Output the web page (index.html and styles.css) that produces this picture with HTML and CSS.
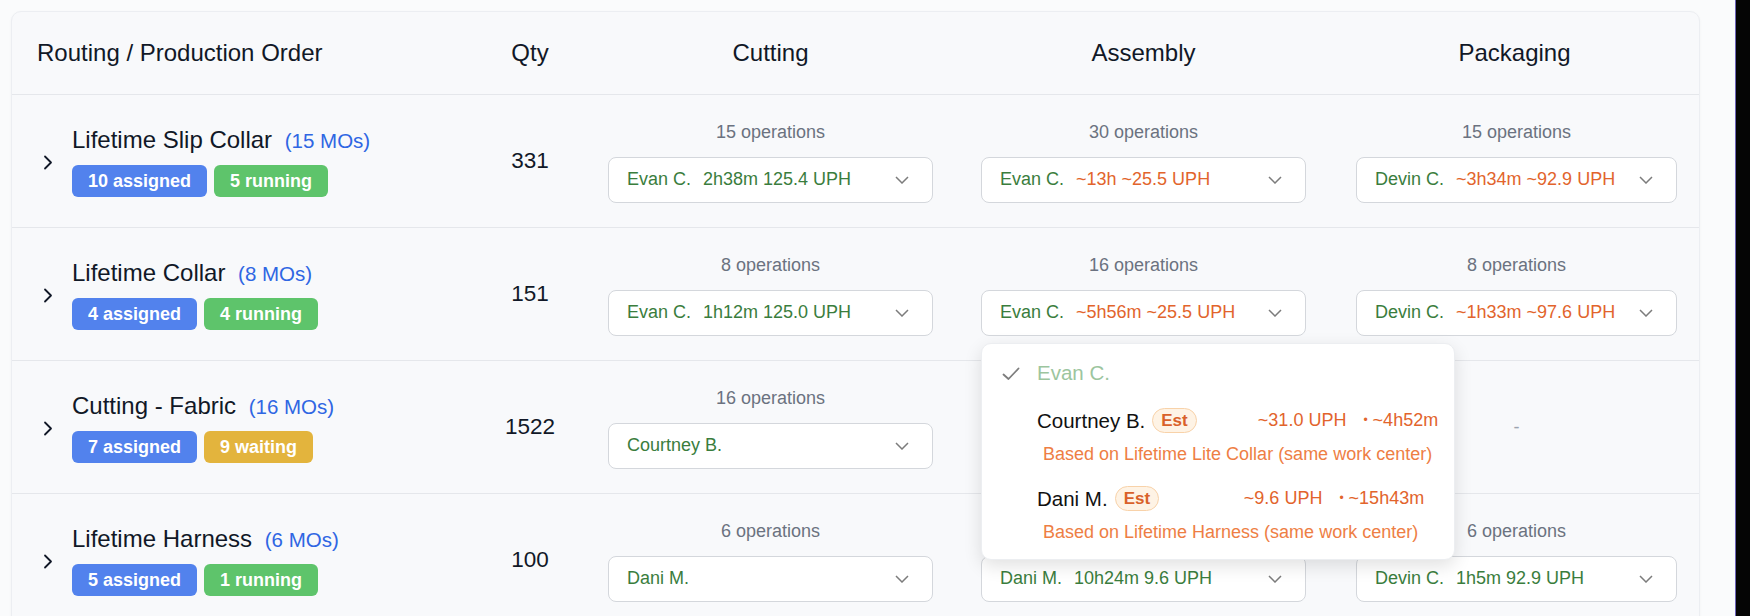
FILE: index.html
```html
<!DOCTYPE html>
<html lang="en">
<head>
<meta charset="utf-8">
<title>Routing</title>
<link rel="stylesheet" href="styles.css">
</head>
<body>
<div class="screen">
  <main class="page">
    <div class="card">
      <div class="row head">
        <div class="hcell left">Routing / Production Order</div>
        <div class="hcell">Qty</div>
        <div class="hcell">Cutting</div>
        <div class="hcell">Assembly</div>
        <div class="hcell">Packaging</div>
      </div>

      <!-- Row 1 -->
      <div class="row">
        <div class="rcell">
          <svg class="expand" width="10" height="15" viewBox="0 0 10 15"><polyline points="2,1.5 8,7.5 2,13.5" fill="none" stroke="#111827" stroke-width="1.8" stroke-linecap="round" stroke-linejoin="round"/></svg>
          <div class="info">
            <div class="name">Lifetime Slip Collar <span class="mos">(15 MOs)</span></div>
            <div class="badges"><span class="badge blue">10 assigned</span><span class="badge green">5 running</span></div>
          </div>
        </div>
        <div class="qty">331</div>
        <div class="stage">
          <div class="ops">15 operations</div>
          <div class="selwrap"><div class="select"><span class="val"><span class="who">Evan C.</span><span class="ok">2h38m 125.4 UPH</span></span><svg class="caret" width="14" height="8" viewBox="0 0 14 8"><polyline points="1,1 7,7 13,1" fill="none" stroke="#7c7c7c" stroke-width="1.5"/></svg></div></div>
        </div>
        <div class="stage">
          <div class="ops">30 operations</div>
          <div class="selwrap"><div class="select"><span class="val"><span class="who">Evan C.</span><span class="est">~13h ~25.5 UPH</span></span><svg class="caret" width="14" height="8" viewBox="0 0 14 8"><polyline points="1,1 7,7 13,1" fill="none" stroke="#7c7c7c" stroke-width="1.5"/></svg></div></div>
        </div>
        <div class="stage last">
          <div class="ops">15 operations</div>
          <div class="selwrap"><div class="select"><span class="val"><span class="who">Devin C.</span><span class="est">~3h34m ~92.9 UPH</span></span><svg class="caret" width="14" height="8" viewBox="0 0 14 8"><polyline points="1,1 7,7 13,1" fill="none" stroke="#7c7c7c" stroke-width="1.5"/></svg></div></div>
        </div>
      </div>

      <!-- Row 2 -->
      <div class="row">
        <div class="rcell">
          <svg class="expand" width="10" height="15" viewBox="0 0 10 15"><polyline points="2,1.5 8,7.5 2,13.5" fill="none" stroke="#111827" stroke-width="1.8" stroke-linecap="round" stroke-linejoin="round"/></svg>
          <div class="info">
            <div class="name">Lifetime Collar <span class="mos">(8 MOs)</span></div>
            <div class="badges"><span class="badge blue">4 assigned</span><span class="badge green">4 running</span></div>
          </div>
        </div>
        <div class="qty">151</div>
        <div class="stage">
          <div class="ops">8 operations</div>
          <div class="selwrap"><div class="select"><span class="val"><span class="who">Evan C.</span><span class="ok">1h12m 125.0 UPH</span></span><svg class="caret" width="14" height="8" viewBox="0 0 14 8"><polyline points="1,1 7,7 13,1" fill="none" stroke="#7c7c7c" stroke-width="1.5"/></svg></div></div>
        </div>
        <div class="stage">
          <div class="ops">16 operations</div>
          <div class="selwrap">
            <div class="select"><span class="val"><span class="who">Evan C.</span><span class="est">~5h56m ~25.5 UPH</span></span><svg class="caret" width="14" height="8" viewBox="0 0 14 8"><polyline points="1,1 7,7 13,1" fill="none" stroke="#7c7c7c" stroke-width="1.5"/></svg></div>
            <div class="menu">
              <div class="opt current">
                <svg class="check" width="18" height="14" viewBox="0 0 18 14"><polyline points="1.5,7.5 6.5,12 16.5,1.5" fill="none" stroke="#7d7d7d" stroke-width="1.8" stroke-linecap="round" stroke-linejoin="round"/></svg>
                <span class="cur-name">Evan C.</span>
              </div>
              <div class="opt">
                <div class="optbox">
                  <div class="optline">
                    <span class="optname">Courtney B. <span class="tag">Est</span></span>
                    <span class="optstats">~31.0 UPH <span class="dot">•</span>~4h52m</span>
                  </div>
                  <div class="optdesc">Based on Lifetime Lite Collar (same work center)</div>
                </div>
              </div>
              <div class="opt">
                <div class="optbox">
                  <div class="optline">
                    <span class="optname">Dani M. <span class="tag">Est</span></span>
                    <span class="optstats">~9.6 UPH <span class="dot">•</span>~15h43m</span>
                  </div>
                  <div class="optdesc">Based on Lifetime Harness (same work center)</div>
                </div>
              </div>
            </div>
          </div>
        </div>
        <div class="stage last">
          <div class="ops">8 operations</div>
          <div class="selwrap"><div class="select"><span class="val"><span class="who">Devin C.</span><span class="est">~1h33m ~97.6 UPH</span></span><svg class="caret" width="14" height="8" viewBox="0 0 14 8"><polyline points="1,1 7,7 13,1" fill="none" stroke="#7c7c7c" stroke-width="1.5"/></svg></div></div>
        </div>
      </div>

      <!-- Row 3 -->
      <div class="row">
        <div class="rcell">
          <svg class="expand" width="10" height="15" viewBox="0 0 10 15"><polyline points="2,1.5 8,7.5 2,13.5" fill="none" stroke="#111827" stroke-width="1.8" stroke-linecap="round" stroke-linejoin="round"/></svg>
          <div class="info">
            <div class="name">Cutting - Fabric <span class="mos">(16 MOs)</span></div>
            <div class="badges"><span class="badge blue">7 assigned</span><span class="badge yellow">9 waiting</span></div>
          </div>
        </div>
        <div class="qty">1522</div>
        <div class="stage">
          <div class="ops">16 operations</div>
          <div class="selwrap"><div class="select"><span class="val"><span class="who">Courtney B.</span></span><svg class="caret" width="14" height="8" viewBox="0 0 14 8"><polyline points="1,1 7,7 13,1" fill="none" stroke="#7c7c7c" stroke-width="1.5"/></svg></div></div>
        </div>
        <div class="stage"></div>
        <div class="stage last"><div class="none">-</div></div>
      </div>

      <!-- Row 4 -->
      <div class="row">
        <div class="rcell">
          <svg class="expand" width="10" height="15" viewBox="0 0 10 15"><polyline points="2,1.5 8,7.5 2,13.5" fill="none" stroke="#111827" stroke-width="1.8" stroke-linecap="round" stroke-linejoin="round"/></svg>
          <div class="info">
            <div class="name">Lifetime Harness <span class="mos">(6 MOs)</span></div>
            <div class="badges"><span class="badge blue">5 assigned</span><span class="badge green">1 running</span></div>
          </div>
        </div>
        <div class="qty">100</div>
        <div class="stage">
          <div class="ops">6 operations</div>
          <div class="selwrap"><div class="select"><span class="val"><span class="who">Dani M.</span></span><svg class="caret" width="14" height="8" viewBox="0 0 14 8"><polyline points="1,1 7,7 13,1" fill="none" stroke="#7c7c7c" stroke-width="1.5"/></svg></div></div>
        </div>
        <div class="stage">
          <div class="ops"></div>
          <div class="selwrap"><div class="select"><span class="val"><span class="who">Dani M.</span><span class="ok">10h24m 9.6 UPH</span></span><svg class="caret" width="14" height="8" viewBox="0 0 14 8"><polyline points="1,1 7,7 13,1" fill="none" stroke="#7c7c7c" stroke-width="1.5"/></svg></div></div>
        </div>
        <div class="stage last">
          <div class="ops">6 operations</div>
          <div class="selwrap"><div class="select"><span class="val"><span class="who">Devin C.</span><span class="ok">1h5m 92.9 UPH</span></span><svg class="caret" width="14" height="8" viewBox="0 0 14 8"><polyline points="1,1 7,7 13,1" fill="none" stroke="#7c7c7c" stroke-width="1.5"/></svg></div></div>
        </div>
      </div>
    </div>
  </main>
  <div class="edge"></div>
</div>
</body>
</html>
```

FILE: styles.css
```css
* { box-sizing: border-box; }

html, body {
  margin: 0;
  padding: 0;
  height: 616px;
  overflow: hidden;
  background: #fafbfc;
  font-family: "Liberation Sans", Arial, Helvetica, sans-serif;
  color: #111827;
}

.screen {
  display: flex;
  width: 100%;
  height: 616px;
}

.page {
  flex: 1 1 auto;
  min-width: 0;
  padding: 11px 0 0 11px;
  overflow: hidden;
}

.edge {
  flex: 0 0 15px;
  width: 15px;
  height: 616px;
  background: #050505;
  border-left: 1px solid #6c63b8;
}

.card {
  width: 1689px;
  background: #f8f9fb;
  border: 1px solid #eceef2;
  border-radius: 10px;
  box-shadow: 0 1px 3px rgba(0, 0, 0, 0.04);
}

.row {
  display: grid;
  grid-template-columns: 464px 108px 373px 373px 369px;
  align-items: center;
  height: 133px;
  border-top: 1px solid #e5e7eb;
}

.row.head {
  height: 82px;
  border-top: none;
}

.hcell {
  font-size: 24px;
  text-align: center;
  color: #111827;
}

.hcell.left {
  text-align: left;
  padding-left: 25px;
}

.rcell {
  display: flex;
  align-items: center;
  padding-left: 31px;
  gap: 19px;
}

.expand { flex: none; margin-top: 2px; }

.info {
  display: flex;
  flex-direction: column;
  gap: 9px;
}

.name {
  font-size: 24px;
  line-height: 30px;
  color: #111827;
}

.mos {
  font-size: 20.5px;
  color: #2f66e3;
  margin-left: 6px;
}

.badges {
  display: flex;
  gap: 7px;
}

.badge {
  height: 32px;
  line-height: 32px;
  padding: 0 16px;
  border-radius: 6px;
  color: #ffffff;
  font-weight: 700;
  font-size: 18px;
}

.badge.blue { background: #5282ed; }
.badge.green { background: #5ec46b; }
.badge.yellow { background: #e3b43d; }

.qty {
  text-align: center;
  font-size: 22.5px;
  color: #111827;
}

.stage {
  display: flex;
  flex-direction: column;
  align-items: stretch;
  gap: 13px;
  padding: 0 24px;
}

.stage.last {
  padding: 0 22px 0 26px;
}

.ops {
  height: 24px;
  text-align: center;
  font-size: 18px;
  line-height: 24px;
  color: #6b7280;
}

.none {
  text-align: center;
  font-size: 18px;
  color: #9ca3af;
}

.selwrap {
  position: relative;
}

.select {
  height: 46px;
  background: #ffffff;
  border: 1px solid #d4d7dc;
  border-radius: 8px;
  padding: 0 23px 0 18px;
  display: flex;
  align-items: center;
  justify-content: space-between;
  font-size: 18px;
}

.val {
  display: flex;
  gap: 12px;
  white-space: nowrap;
}

.who { color: #3a7d3d; }
.ok { color: #3a7d3d; }
.est { color: #e2642c; }

.caret { flex: none; }

.menu {
  position: absolute;
  top: calc(100% + 7px);
  left: 0;
  z-index: 10;
  width: 474px;
  background: #ffffff;
  border: 1px solid #eceef1;
  border-radius: 10px;
  box-shadow: 0 6px 18px rgba(0, 0, 0, 0.12);
  padding: 6px 0 6px 0;
}

.opt {
  padding: 9px 0 9px 55px;
}

.opt.current {
  position: relative;
  height: 47px;
  display: flex;
  align-items: center;
  padding-top: 0;
  padding-bottom: 0;
}

.check {
  position: absolute;
  left: 20px;
  top: 17px;
}

.cur-name {
  font-size: 20.5px;
  color: #9cc59e;
}

.optbox {
  display: inline-flex;
  flex-direction: column;
  gap: 6px;
}

.optline {
  height: 30px;
  display: flex;
  align-items: center;
  justify-content: space-between;
}

.optname {
  display: flex;
  align-items: center;
  gap: 7px;
  font-size: 20.5px;
  color: #111111;
}

.tag {
  height: 25px;
  line-height: 23px;
  padding: 0 8px;
  border-radius: 13px;
  background: #fef3e5;
  border: 1px solid #f8d2a9;
  color: #d9612a;
  font-weight: 700;
  font-size: 17px;
}

.optstats {
  font-size: 18px;
  color: #e2642c;
  white-space: nowrap;
}

.dot {
  font-size: 12px;
  margin: 0 5px 0 12px;
  vertical-align: 2px;
}

.optdesc {
  font-size: 18px;
  line-height: 24px;
  color: #ee7e44;
  padding: 0 6px;
  white-space: nowrap;
}
```
